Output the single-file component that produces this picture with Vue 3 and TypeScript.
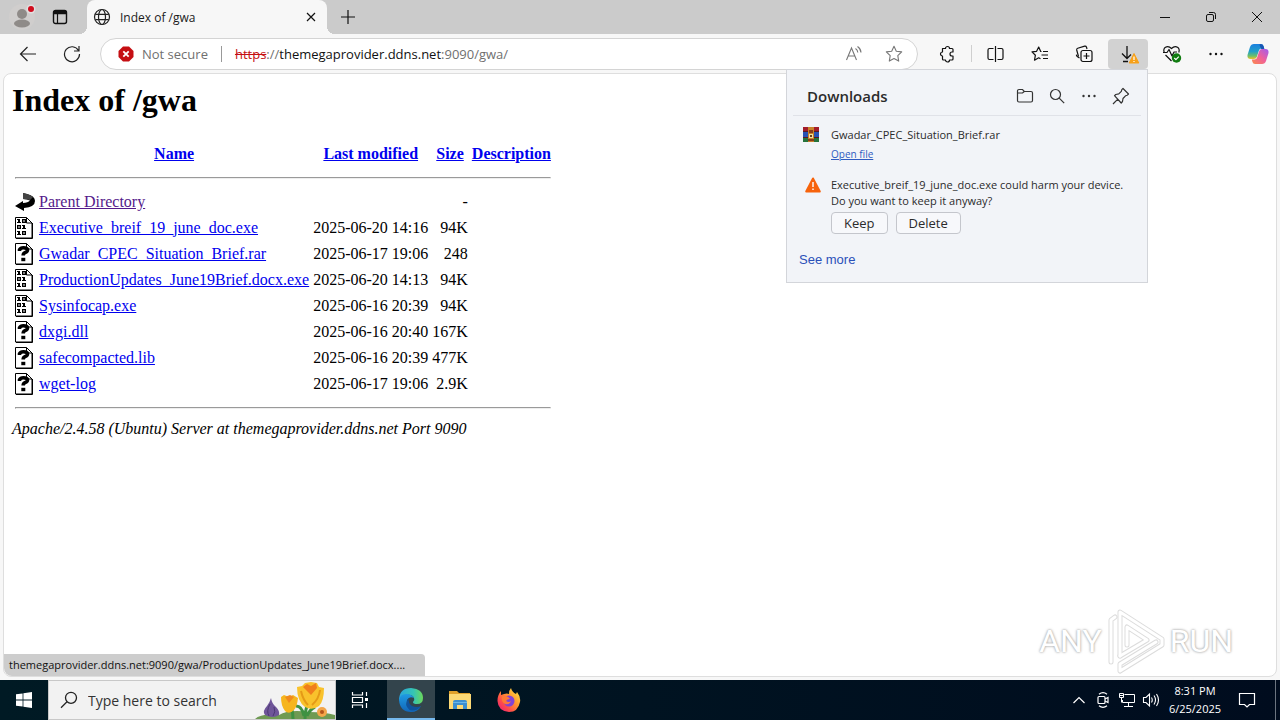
<script setup lang="ts">
import { ref } from 'vue'

interface Entry {
  icon: 'back' | 'binary' | 'unknown'
  name: string
  modified: string
  size: string
}

const entries: Entry[] = [
  { icon: 'back', name: 'Parent Directory', modified: '', size: '-' },
  { icon: 'binary', name: 'Executive_breif_19_june_doc.exe', modified: '2025-06-20 14:16', size: '94K' },
  { icon: 'unknown', name: 'Gwadar_CPEC_Situation_Brief.rar', modified: '2025-06-17 19:06', size: '248' },
  { icon: 'binary', name: 'ProductionUpdates_June19Brief.docx.exe', modified: '2025-06-20 14:13', size: '94K' },
  { icon: 'binary', name: 'Sysinfocap.exe', modified: '2025-06-16 20:39', size: '94K' },
  { icon: 'unknown', name: 'dxgi.dll', modified: '2025-06-16 20:40', size: '167K' },
  { icon: 'unknown', name: 'safecompacted.lib', modified: '2025-06-16 20:39', size: '477K' },
  { icon: 'unknown', name: 'wget-log', modified: '2025-06-17 19:06', size: '2.9K' },
]

const query = ref('')
</script>

<template>
  <div class="desktop">
    <header class="tabstrip">
      <button class="profile" aria-label="Profile">
        <svg width="28" height="28" viewBox="0 0 28 28">
          <circle cx="14" cy="14" r="13" fill="#d0cecd" />
          <circle cx="14" cy="11" r="5" fill="#8f8b88" />
          <ellipse cx="14" cy="20.500" rx="8" ry="4" fill="#8f8b88" />
          <circle cx="23" cy="6" r="4.500" fill="#e2dfdf" />
          <circle cx="23" cy="6" r="3" fill="#d00d1e" />
        </svg>
      </button>
      <button class="workspace" aria-label="Tab actions">
        <svg width="16" height="16" viewBox="0 0 16 16" fill="none" stroke="#111">
          <rect x="1.500" y="1.500" width="13" height="13" rx="2" stroke-width="1.400" />
          <path d="M2 3.500h12" stroke-width="3.500" />
          <path d="M5.500 5v9" stroke-width="1.200" />
        </svg>
      </button>
      <div class="tab">
        <svg width="18" height="18" viewBox="0 0 18 18" fill="none" stroke="#222" stroke-width="1.200">
          <circle cx="9" cy="9" r="7.500" />
          <ellipse cx="9" cy="9" rx="3.500" ry="7.500" />
          <path d="M2.300 6.300h13.400M2.300 11.700h13.400" />
        </svg>
        <span class="tab-title">Index of /gwa</span>
        <button class="tab-close" aria-label="Close tab">
          <svg width="10" height="10" viewBox="0 0 10 10" stroke="#111" stroke-width="1.200"><path d="M1 1l8 8M9 1l-8 8" /></svg>
        </button>
      </div>
      <button class="new-tab" aria-label="New tab">
        <svg width="14" height="14" viewBox="0 0 14 14" stroke="#111" stroke-width="1.200"><path d="M7 0v14M0 7h14" /></svg>
      </button>
      <div class="window-buttons">
        <button aria-label="Minimize">
          <svg width="12" height="12" viewBox="0 0 12 12" stroke="#111"><path d="M1 6.500h10" /></svg>
        </button>
        <button aria-label="Restore">
          <svg width="12" height="12" viewBox="0 0 12 12" fill="none" stroke="#111">
            <rect x="1.500" y="3.500" width="7" height="7" rx="1.500" />
            <path d="M4 1.500h4.500q2 0 2 2V8" />
          </svg>
        </button>
        <button aria-label="Close">
          <svg width="12" height="12" viewBox="0 0 12 12" stroke="#111"><path d="M1 1l10 10M11 1L1 11" /></svg>
        </button>
      </div>
    </header>

    <nav class="toolbar">
      <button class="tool" aria-label="Back">
        <svg width="18" height="16" viewBox="0 0 18 16" fill="none" stroke="#222" stroke-width="1.200"><path d="M17 8H1.500M8.500 1L1.500 8l7 7" /></svg>
      </button>
      <button class="tool" aria-label="Refresh">
        <svg width="18" height="18" viewBox="0 0 18 18" fill="none" stroke="#222" stroke-width="1.200"><path d="M15.500 5.500A7.500 7.500 0 1 0 16.500 9M16 1v5h-5" /></svg>
      </button>
      <div class="address">
        <svg width="16" height="16" viewBox="0 0 16 16">
          <path d="M5 .5h6L15.500 5v6L11 15.500H5L.5 11V5z" fill="#c50f13" />
          <path d="M5.300 5.300l5.400 5.400M10.700 5.300l-5.400 5.400" stroke="#fff" stroke-width="1.800" />
        </svg>
        <button class="not-secure">Not secure</button>
        <span class="divider"></span>
        <div class="url" role="textbox" contenteditable="true" aria-label="Address"><s>https</s>://<b>themegaprovider.ddns.net</b>:9090/gwa/</div>
        <button class="tool" aria-label="Read aloud">
          <svg width="18" height="18" viewBox="0 0 18 18" fill="none" stroke="#777" stroke-width="1.100">
            <path d="M1.500 15L6.500 3l5 12M3.200 11h6.600" />
            <path d="M10.500 3.500q2.200 1.500 2.300 4M12.500 1.500q3.300 2.200 3.500 6" />
          </svg>
        </button>
        <button class="tool" aria-label="Add to favorites">
          <svg width="18" height="18" viewBox="0 0 18 18" fill="none" stroke="#777" stroke-width="1.100" stroke-linejoin="round">
            <path d="M9 1.300l2.300 4.900 5.400.7-3.900 3.800.9 5.400L9 13.500l-4.700 2.600.9-5.400L1.300 6.900l5.400-.7z" />
          </svg>
        </button>
      </div>
      <button class="tool" aria-label="Extensions">
        <svg width="18" height="18" viewBox="0 0 18 18" fill="none" stroke="#111" stroke-width="1.200" stroke-linejoin="round">
          <path d="M4.500 3.500h3a2 2 0 0 1 4 0H14a1 1 0 0 1 1 1V7h-1a2 2 0 0 0 0 4h1v3a1 1 0 0 1-1 1h-2.500a2 2 0 0 1-4 0H5.500a1 1 0 0 1-1-1v-3a2 2 0 0 1 0-4z" />
        </svg>
      </button>
      <span class="separator"></span>
      <button class="tool" aria-label="Split screen">
        <svg width="18" height="18" viewBox="0 0 18 18" fill="none" stroke="#111" stroke-width="1.200">
          <path d="M8.500 1v16M6.500 3.500h-4A1.500 1.500 0 0 0 1 5v8a1.500 1.500 0 0 0 1.500 1.500h4M10.500 3.500h4A1.500 1.500 0 0 1 16 5v8a1.500 1.500 0 0 1-1.500 1.500h-4" />
        </svg>
      </button>
      <button class="tool" aria-label="Favorites">
        <svg width="18" height="18" viewBox="0 0 18 18" fill="none" stroke="#111" stroke-width="1.200" stroke-linejoin="round">
          <path d="M10.500 6.500H9.700L7.700 2 5.600 6.300l-4.600.6 3.400 3.300-.9 5 4.200-2.400 1.800 1M12 6.500h5M10.500 10H17M12 13.500h5" />
        </svg>
      </button>
      <button class="tool" aria-label="Collections">
        <svg width="18" height="18" viewBox="0 0 18 18" fill="none" stroke="#111" stroke-width="1.200" stroke-linejoin="round">
          <path d="M4.500 13l-2.300-1.500q-1-.7-.7-1.800M3.500 11.500L1.700 5q-.3-1.400 1-1.800l7-2q1.300-.3 1.800 1l.5 1.800" />
          <rect x="6" y="5.500" width="11" height="11" rx="2" />
          <path d="M11.500 8v6M8.500 11h6" />
        </svg>
      </button>
      <div class="downloads">
        <button class="tool active" aria-label="Downloads">
          <svg width="26" height="22" viewBox="0 0 26 22" fill="none">
            <path d="M12 3v12M7 10.500l5 5 4-4M8 18.500h5" stroke="#111" stroke-width="1.300" />
            <path d="M19 10.500l4.800 9.500H14.200z" fill="#f7a11a" stroke="#f7a11a" stroke-linejoin="round" />
            <path d="M19 13.500v3.500M19 18v1" stroke="#fff" stroke-width="1.200" />
          </svg>
        </button>
        <section class="popup">
          <div class="popup-head">
            <h2>Downloads</h2>
            <button aria-label="Open downloads folder">
              <svg width="18" height="18" viewBox="0 0 18 18" fill="none" stroke="#333" stroke-width="1.200">
                <path d="M1.500 5V4A1.500 1.500 0 0 1 3 2.500h3.500L8.300 4.500H15A1.500 1.500 0 0 1 16.500 6v7.500A1.500 1.500 0 0 1 15 15H3a1.500 1.500 0 0 1-1.500-1.500zM1.500 6h5l1.800-1.500" />
              </svg>
            </button>
            <button aria-label="Search downloads">
              <svg width="18" height="18" viewBox="0 0 18 18" fill="none" stroke="#333" stroke-width="1.200"><circle cx="7.500" cy="7.500" r="5" /><path d="M11.200 11.200l5 5" /></svg>
            </button>
            <button aria-label="More options">
              <svg width="18" height="18" viewBox="0 0 18 18" fill="#333"><circle cx="3.500" cy="9" r="1.200" /><circle cx="9" cy="9" r="1.200" /><circle cx="14.500" cy="9" r="1.200" /></svg>
            </button>
            <button aria-label="Pin downloads">
              <svg width="18" height="18" viewBox="0 0 18 18" fill="none" stroke="#333" stroke-width="1.200" stroke-linejoin="round">
                <path d="M11 1.500l5.500 5.500-1.200 1.200-1.800.6-2.500 2.700-.5 3L9.200 16 2.500 8.700l1.300-1.200 3-.6L9.300 4.300l.5-1.700zM5.800 12.200L1 17" />
              </svg>
            </button>
          </div>
          <div class="download">
            <svg width="16" height="16" viewBox="0 0 16 16">
              <path fill="#a31c2a" d="M0 0h16v5H0z" />
              <path fill="#2851b5" d="M0 5h16v6H0z" />
              <path fill="#26733c" d="M0 11h16v4H0z" />
              <path fill="#571923" d="M0 4h16v1H0zM0 10h16v1H0z" />
              <path fill="#c9822a" d="M5 0h6v15H5z" />
              <path fill="#8a3b1b" d="M6 3h4v3H6zM5 12h6v2H5z" />
              <path fill="#f4dda0" d="M6 7h4v4H6z" />
              <path fill="#65401f" d="M7 8h2v2H7z" />
            </svg>
            <div>
              <p>Gwadar_CPEC_Situation_Brief.rar</p>
              <a class="open" href="#">Open file</a>
            </div>
          </div>
          <div class="download warning">
            <svg width="18" height="16" viewBox="0 0 18 16">
              <path d="M9 1.500l6.800 13H2.200z" fill="#f7630c" stroke="#f7630c" stroke-width="2" stroke-linejoin="round" />
              <path d="M9 5v5M9 11.500v1.500" stroke="#fff" stroke-width="1.400" />
            </svg>
            <div>
              <p>Executive_breif_19_june_doc.exe could harm your device.<br />Do you want to keep it anyway?</p>
              <div class="actions">
                <button>Keep</button>
                <button>Delete</button>
              </div>
            </div>
          </div>
          <a class="see-more" href="#">See more</a>
        </section>
      </div>
      <button class="tool" aria-label="Browser essentials">
        <svg width="20" height="20" viewBox="0 0 20 20" fill="none" stroke="#111" stroke-width="1.200" stroke-linejoin="round">
          <path d="M2.200 8.500Q1 5 3.500 3.300 6.500 1.700 9.500 4.500 12.500 1.700 15.500 3.300 18 5 16.800 8.500M3.500 11l6 6M1 8.500h4l2-3 3 6.500 2-4h3" />
          <circle cx="14.500" cy="14" r="4.700" fill="#107c10" stroke="none" />
          <path d="M12.300 14l1.600 1.600 2.900-3" stroke="#fff" />
        </svg>
      </button>
      <button class="tool" aria-label="Settings and more">
        <svg width="18" height="18" viewBox="0 0 18 18" fill="#111"><circle cx="3.500" cy="9" r="1.200" /><circle cx="9" cy="9" r="1.200" /><circle cx="14.500" cy="9" r="1.200" /></svg>
      </button>
      <button class="tool copilot" aria-label="Copilot">
        <svg width="24" height="24" viewBox="0 0 24 24">
          <defs>
            <linearGradient id="cp-a" x1="0" y1="0" x2="0" y2="1">
              <stop offset="0" stop-color="#1a7fe0" /><stop offset=".5" stop-color="#22a0c8" /><stop offset=".8" stop-color="#6cc06a" /><stop offset="1" stop-color="#f0c22a" />
            </linearGradient>
            <linearGradient id="cp-b" x1="1" y1="0" x2="0" y2="1">
              <stop offset="0" stop-color="#a05cf0" /><stop offset=".5" stop-color="#f0609a" /><stop offset="1" stop-color="#fb8a4b" />
            </linearGradient>
          </defs>
          <path d="M8 2h7q2 0 2.500 2l.7 2.500h-2.700q-2 0-2.700 2.200l-2 6.300Q10 17 8 17H4.500Q1 17 1.500 13L4 5q1-3 4-3z" fill="url(#cp-a)" />
          <path d="M16 22H9q-2 0-2.500-2l-.7-2.500h2.700q2 0 2.700-2.200l2-6.300q.8-2 2.800-2h3.500q3.500 0 3 4L20 19q-1 3-4 3z" fill="url(#cp-b)" />
          <path d="M14 2q3 0 3.500 2l.9 3h-3.200L13.500 3z" fill="#1956b3" />
        </svg>
      </button>
    </nav>

    <main class="page">
      <h1>Index of /gwa</h1>
      <table>
        <thead>
          <tr>
            <th><span class="blank"></span></th>
            <th><a href="#">Name</a></th>
            <th><a href="#">Last modified</a></th>
            <th><a href="#">Size</a></th>
            <th><a href="#">Description</a></th>
          </tr>
        </thead>
        <tbody>
          <tr><td colspan="5"><hr /></td></tr>
          <tr v-for="entry in entries" :key="entry.name">
            <td>
              <svg v-if="entry.icon === 'back'" width="20" height="22" viewBox="0 0 20 22">
                <path d="M8 2l4 1q8 2 8 7 0 6-11 7v3L0 15l8-5v2q5-.5 7-2.500Q12 8 8 8z" fill="#000" />
                <path d="M8 2l4 1q4 1 6 3l-3 3Q12 8 8 8z" fill="#444" />
              </svg>
              <svg v-else width="20" height="22" viewBox="0 0 20 22" fill="none" stroke="#000">
                <path d="M.5.5h11l5.500 5.500v15H.5z" fill="#fff" />
                <path d="M11.500.5V6H17" />
                <path d="M17.500 6v15.500H1" />
                <g v-if="entry.icon === 'binary'" stroke="none" fill="#000">
                  <path d="M2 2h3v3h1v1H2V5h1V3H2zM2 14h3v3h1v1H2v-1h1v-2H2zM7 8h3v3h1v1H7v-1h1V9H7z" />
                  <path fill-rule="evenodd" d="M7 2h4v4H7zM8.500 3v2h1V3zM7 14h4v4H7zM8.500 15v2h1v-2zM2 8h4v4H2zM3.500 9v2h1V9z" />
                </g>
                <g v-else>
                  <path d="M4.500 8V6.800Q5.500 4.800 8.500 4.800q4 0 4 2.200 0 1.700-2.500 2.700-1.800.8-1.800 2.800" stroke-width="3.600" />
                  <path d="M6.300 16.500h4" stroke-width="3.400" />
                </g>
              </svg>
            </td>
            <td><a href="#" :class="{ visited: entry.icon === 'back' }">{{ entry.name }}</a></td>
            <td class="right">{{ entry.modified }}</td>
            <td class="right">{{ entry.size }}</td>
            <td></td>
          </tr>
          <tr><td colspan="5"><hr /></td></tr>
        </tbody>
      </table>
      <address>Apache/2.4.58 (Ubuntu) Server at themegaprovider.ddns.net Port 9090</address>

      <div class="watermark">
        <span>ANY</span>
        <svg width="60" height="66" viewBox="0 0 60 66" fill="none" stroke-linejoin="round" stroke-linecap="round">
          <g stroke="#dcdcdc" stroke-width="5">
            <path d="M5 54V12l4-3" />
            <path d="M14 48V4l42 27v6L14 63v-7l36-22" />
            <path d="M14 48l27-16-20-13v18" />
          </g>
          <g stroke="#fff" stroke-width="3">
            <path d="M5 54V12l4-3" />
            <path d="M14 48V4l42 27v6L14 63v-7l36-22" />
            <path d="M14 48l27-16-20-13v18" />
          </g>
        </svg>
        <span>RUN</span>
      </div>
      <div class="status">themegaprovider.ddns.net:9090/gwa/ProductionUpdates_June19Brief.docx....</div>
    </main>

    <footer class="taskbar">
      <button class="start" aria-label="Start">
        <svg width="16" height="16" viewBox="0 0 16 16" fill="#fff"><path d="M0 2.300l6.600-.9v6.200H0zM7.400 1.300L16 0v7.600H7.400zM0 8.400h6.600v6.200L0 13.700zM7.400 8.400H16V16l-8.600-1.300z" /></svg>
      </button>
      <label class="search">
        <svg width="18" height="18" viewBox="0 0 18 18" fill="none" stroke="#222" stroke-width="1.300"><circle cx="11" cy="6.800" r="5.500" /><path d="M7 10.700L1 16.800" /></svg>
        <input v-model="query" type="text" placeholder="Type here to search" aria-label="Search" />
        <svg width="80" height="38" viewBox="0 0 80 38">
          <path d="M0 38q6-6 24-4 10-6 30-3 16 0 26 3v4z" fill="#6f9a53" />
          <path d="M38 38q0-12-5-14M50 38q0-14 6-18M49 35q-2-10-8-10M52 35q3-7 8-9" stroke="#3f9142" stroke-width="3" fill="none" />
          <path d="M16 17q1 6 5 9 4 4 3 8-6 4-14 0-3-4 2-9 3-4 4-8z" fill="#6f5599" />
          <path d="M15 23q-4 7-1 12M19 26q2 5-1 9" stroke="#4b3973" fill="none" />
          <path d="M26 16l3-2 5 2 4-2 5 3q-1 9-4 12-5 5-9 1-4-5-4-14z" fill="#f6b51e" />
          <path d="M30 16l4 6 5-6-4-2z" fill="#f08a1d" />
          <path d="M42 6l5-1 3-3 6-1 6 1 2 4 5 1q0 13-5 18-7 5-14 1-8-6-8-20z" fill="#f9c22c" />
          <path d="M48 6l4-3 4 2 5-3 1 5-6 7z" fill="#f07f1c" />
          <path d="M46 10q2 9 7 14M65 9q-1 9-8 15" stroke="#e59a16" stroke-width="2" fill="none" />
          <circle cx="67" cy="31" r="5" fill="#f3a64a" /><circle cx="67" cy="31" r="2" fill="#b3541b" />
        </svg>
      </label>
      <button class="app task-view" aria-label="Task view">
        <svg width="18" height="18" viewBox="0 0 18 18" fill="none" stroke="#fff" stroke-width="1.200">
          <path d="M1.500 1v3h10V1M1.500 17v-3h10v3M1.500 6.500h10v5h-10zM15.500 1v4M15.500 12v5" /><path d="M14 7h3v3h-3z" fill="#fff" stroke="none" />
        </svg>
      </button>
      <button class="app current" aria-label="Microsoft Edge">
        <svg width="24" height="24" viewBox="0 0 24 24">
          <defs>
            <linearGradient id="ed-a" x1="0" y1="0" x2="1" y2="0"><stop offset="0" stop-color="#2aa5dd" /><stop offset=".6" stop-color="#35c4b5" /><stop offset="1" stop-color="#6bd85a" /></linearGradient>
            <linearGradient id="ed-b" x1="0" y1="0" x2="0" y2="1"><stop offset="0" stop-color="#1f9be3" /><stop offset="1" stop-color="#1266b8" /></linearGradient>
          </defs>
          <path d="M0 11Q1 0 12 0q12 1 12 10 0 6-6 6-4 0-4-2 2-2 1-4-2-4-7-3-6 1-8 6z" fill="url(#ed-a)" />
          <path d="M0 12q1-6 7-6 6 0 8 4-5-2-7 2-2 8 6 9 5 0 8-3-3 6-10 6Q1 24 0 12z" fill="url(#ed-b)" />
          <path d="M9.500 10q-5 7 1 12 7 2 11.500-4-4 2-9 0-4-3-3.500-8z" fill="#10529b" />
        </svg>
      </button>
      <button class="app" aria-label="File Explorer">
        <svg width="22" height="20" viewBox="0 0 22 20">
          <path d="M0 1h8l2 2h11v4H0z" fill="#e0a12b" />
          <path d="M0 4h22v15H0z" fill="#fcd975" />
          <path d="M4 19v-7q0-2 2-2h10q2 0 2 2v7h-4v-4H8v4z" fill="#3b8fd0" />
          <path d="M4 12.500h14" stroke="#67b5ea" />
        </svg>
      </button>
      <button class="app" aria-label="Firefox">
        <svg width="24" height="24" viewBox="0 0 24 24">
          <defs>
            <linearGradient id="ff" x1="1" y1="0" x2="0" y2="1"><stop offset="0" stop-color="#fff04d" /><stop offset=".4" stop-color="#ff9a2e" /><stop offset=".7" stop-color="#ff4a4a" /><stop offset="1" stop-color="#e31587" /></linearGradient>
          </defs>
          <path d="M14 0q1 4 5 6l1-2q4 5 3 10-2 10-11 10Q1 23 .5 13 .4 7 4 3v4l3-1q3-1 5 0 0-4 2-6z" fill="url(#ff)" />
          <circle cx="12" cy="13" r="5.500" fill="#8143d6" />
          <path d="M5 8q5-1 8 3-3 0-4 2 3 2 5 0-1 4-6 3-4-2-3-8z" fill="#ff7a35" />
        </svg>
      </button>
      <div class="tray">
        <button aria-label="Show hidden icons">
          <svg width="14" height="14" viewBox="0 0 14 14" fill="none" stroke="#fff" stroke-width="1.200"><path d="M1.500 10L7 4.500l5.500 5.500" /></svg>
        </button>
        <button aria-label="Meet now">
          <svg width="16" height="18" viewBox="0 0 16 18" fill="none" stroke="#fff" stroke-width="1.200"><rect x="3" y="5.500" width="7" height="7" rx="1" /><path d="M10 8l3-1.500v5L10 10M4 3.200Q8 .2 12 3.200M4 14.800q4 3 8 0" /></svg>
        </button>
        <button aria-label="Network">
          <svg width="18" height="16" viewBox="0 0 18 16" fill="none" stroke="#fff"><path d="M6.500 2.500h10v8h-12V8M10.500 10.500v4M6 14.500h9M1.500 1.500h4v4h-4zM3.500 5.500v5M1.500 3.500h4" /></svg>
        </button>
        <button aria-label="Volume">
          <svg width="18" height="16" viewBox="0 0 18 16" fill="none" stroke="#fff" stroke-width="1.100"><path d="M1.500 5.500h2.500l3.500-3.500v12L4 10.500H1.500zM9.500 5.500q1.500 2.500 0 5M12 3.500q3 4.500 0 9M14.500 2q4 6 0 12" /></svg>
        </button>
        <button class="clock"><span>8:31 PM</span><span>6/25/2025</span></button>
        <button class="notify" aria-label="Notifications">
          <svg width="18" height="18" viewBox="0 0 18 18" fill="none" stroke="#fff" stroke-width="1.200"><path d="M1.500 2.500h15v11h-5l-2.500 2.500L6.500 13.500h-5z" /></svg>
        </button>
        <button class="peek" aria-label="Show desktop"></button>
      </div>
    </footer>
  </div>
</template>

<style>
body {
  margin: 0;
}
</style>

<style scoped>
.desktop {
  display: flex;
  flex-direction: column;
  min-height: 100vh;
  background: #f7f7f7;
  font-family: "Open Sans", "Noto Sans", sans-serif;
  font-size: 12px;
  color: #1b1b1b;
}
button {
  display: flex;
  align-items: center;
  justify-content: center;
  padding: 0;
  border: 0;
  background: none;
  font: inherit;
  color: inherit;
}
svg {
  display: block;
  flex: none;
}
.tabstrip {
  display: flex;
  height: 34px;
  background: #cbcbcb;
}
.profile {
  width: 44px;
}
.workspace {
  width: 32px;
}
.tab {
  position: relative;
  display: flex;
  align-items: center;
  gap: 9px;
  width: 224px;
  margin-left: 11px;
  padding: 0 10px 0 6px;
  border-radius: 8px 8px 0 0;
  background: #f7f7f7;
}
.tab::before,
.tab::after {
  content: "";
  position: absolute;
  bottom: 0;
  width: 8px;
  height: 8px;
}
.tab::before {
  right: 100%;
  background: radial-gradient(circle at 0 0, #cbcbcb 8px, #f7f7f7 8px);
}
.tab::after {
  left: 100%;
  background: radial-gradient(circle at 100% 0, #cbcbcb 8px, #f7f7f7 8px);
}
.tab-title {
  flex: 1;
}
.tab-close {
  width: 12px;
  height: 20px;
}
.new-tab {
  width: 42px;
}
.window-buttons {
  display: flex;
  margin-left: auto;
}
.window-buttons button {
  width: 46px;
}
.toolbar {
  display: flex;
  align-items: center;
  gap: 4px;
  height: 39px;
  padding: 0 4px 0 8px;
}
.tool {
  flex: none;
  width: 40px;
  height: 30px;
  border-radius: 4px;
}
.active {
  background: #d2d2d2;
}
.copilot {
  width: 36px;
}
.address {
  display: flex;
  flex: 1;
  align-items: center;
  height: 30px;
  margin: 0 5px 0 4px;
  padding: 0 3px 0 17px;
  border: 1px solid #d4d4d4;
  border-radius: 16px;
  background: #fff;
  font-size: 13px;
  color: #707070;
}
.not-secure {
  margin-left: 8px;
}
.divider {
  width: 1px;
  height: 16px;
  margin: 0 13px;
  background: #999;
}
.url {
  flex: 1;
  white-space: nowrap;
}
.url s {
  color: #c50f13;
}
.url b {
  font-weight: 400;
  color: #111;
}
.separator {
  width: 1px;
  height: 17px;
  background: #cfcfcf;
}
.downloads {
  position: relative;
}
.popup {
  position: absolute;
  z-index: 2;
  top: 100%;
  right: 0;
  box-sizing: border-box;
  width: 362px;
  padding: 0 6px 13px;
  border: 1px solid #d3d5da;
  background: #f2f4f8;
  font-size: 11px;
  color: #2b2b2b;
}
.popup-head {
  display: flex;
  align-items: center;
  height: 46px;
  padding: 8px 4px 0 14px;
  box-sizing: border-box;
  border-bottom: 1px solid #e0e2e8;
}
.popup-head h2 {
  flex: 1;
  margin: 0;
  font-size: 15px;
  font-weight: 600;
}
.popup-head button {
  width: 32px;
  height: 32px;
}
.download {
  display: flex;
  gap: 12px;
  padding: 11px 0 0 10px;
}
.download p {
  margin: 0;
  line-height: 16px;
}
.open {
  display: block;
  width: max-content;
  font-size: 10px;
  line-height: 22px;
  color: #2f5bc0;
}
.warning {
  gap: 9px;
  padding: 12px 0 0 11px;
}
.actions {
  display: flex;
  gap: 8px;
  margin-top: 3px;
}
.actions button {
  height: 22px;
  padding: 0 12px;
  border: 1px solid #c4c6cc;
  border-radius: 4px;
  background: #f7f8fb;
  font-size: 13px;
}
.see-more {
  display: block;
  width: max-content;
  margin: 17px 0 0 6px;
  font-family: "Liberation Sans", sans-serif;
  font-size: 13px;
  line-height: 18px;
  color: #2a50b8;
  text-decoration: none;
}
.page {
  position: relative;
  flex: 1;
  margin: 0 3px 3px;
  padding: 8px;
  border: 1px solid #dedede;
  border-radius: 8px;
  background: #fff;
  font-family: "Liberation Serif", serif;
  font-size: 16px;
  line-height: 18px;
  color: #000;
}
h1 {
  margin: 0 0 21px;
  font-size: 32px;
  line-height: 37px;
}
table {
  border-spacing: 2px;
}
th,
td {
  padding: 1px;
}
.blank {
  display: block;
  height: 22px;
}
td hr {
  margin: 8px 0;
}
.right {
  text-align: right;
}
.page a {
  color: #0000ee;
}
.page a.visited {
  color: #551a8b;
}
.watermark {
  position: absolute;
  right: 43px;
  bottom: 2px;
  display: flex;
  align-items: center;
  gap: 4px;
  font-family: "Roboto", sans-serif;
  font-size: 32px;
  line-height: 40px;
  color: #fff;
  text-shadow: 0 0 3px #aaa, 0 0 2px #bbb;
}
.status {
  position: absolute;
  left: 0;
  bottom: 0;
  padding: 0 20px 0 5px;
  border-radius: 0 4px 0 8px;
  background: #cdcdcd;
  font-family: "Open Sans", "Noto Sans", sans-serif;
  font-size: 11px;
  line-height: 22px;
  color: #111;
}
.taskbar {
  display: flex;
  height: 40px;
  background: linear-gradient(90deg, #001a24, #000c1e);
  color: #fff;
}
.start {
  width: 48px;
}
.search {
  display: flex;
  align-items: center;
  box-sizing: border-box;
  width: 288px;
  padding-left: 11px;
  border: 1px solid #c8c8c8;
  background: #f2f2f2;
}
.search input {
  flex: 1;
  min-width: 0;
  padding: 0 0 0 10px;
  border: 0;
  outline: 0;
  background: none;
  font: inherit;
  font-size: 14px;
}
.search input::placeholder {
  color: #333;
  opacity: 1;
}
.app {
  width: 48px;
  margin-right: 1px;
}
.task-view {
  margin-right: 3px;
}
.current {
  box-sizing: border-box;
  padding-top: 2px;
  border-bottom: 2px solid #76b9ed;
  background: #33444c;
}
.tray {
  display: flex;
  margin-left: auto;
}
.tray button {
  width: 24px;
}
.tray .clock {
  flex-direction: column;
  width: 64px;
  font-size: 11px;
  line-height: 18px;
}
.tray .notify {
  width: 40px;
}
.tray .peek {
  width: 5px;
  margin-left: 8px;
  border-left: 1px solid #6b7480;
}
</style>
